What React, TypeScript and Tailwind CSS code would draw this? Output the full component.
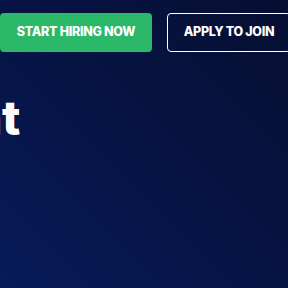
import React from 'react';

const App: React.FC = () => {
  return (
    <div
      className="w-[288px] h-[288px] overflow-hidden bg-gradient-to-tr from-[#071b58] via-[#061445] to-[#060f31] text-white"
      style={{ fontFamily: 'Inter, "Noto Sans", sans-serif' }}
    >
      <div className="flex items-start gap-[15px] pt-[13px] w-[320px]">
        <button className="h-[39px] w-[152px] shrink-0 rounded-[4px] bg-[#2bb868] text-[12.5px] font-extrabold tracking-[-0.3px] text-white">
          START HIRING NOW
        </button>
        <button className="h-[39px] w-[124px] shrink-0 rounded-[4px] border border-white text-[12.5px] font-extrabold tracking-[-0.3px] text-white">
          APPLY TO JOIN
        </button>
      </div>
      <div className="mt-[38px] flex">
        <h1 className="ml-[-28px] whitespace-nowrap text-[48px] font-extrabold leading-[56px] tracking-[-0.5px]">
          nt
        </h1>
      </div>
    </div>
  );
};

export default App;
